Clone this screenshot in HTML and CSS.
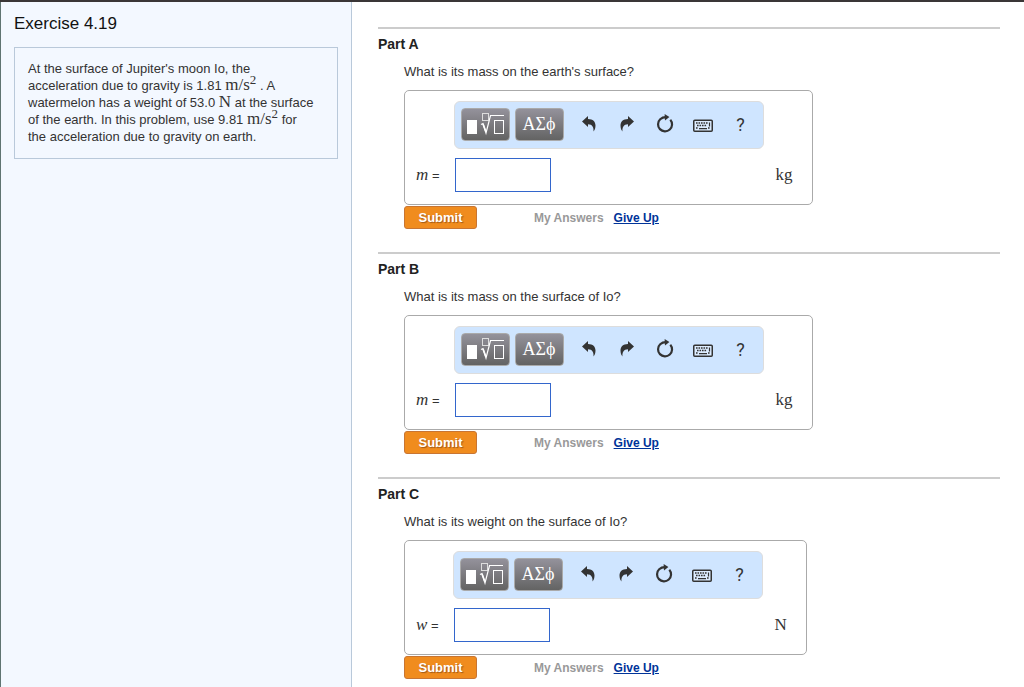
FILE: index.html
```html
<!DOCTYPE html>
<html lang="en">
<head>
<meta charset="utf-8">
<title>Exercise 4.19</title>
<link rel="stylesheet" href="styles.css">
</head>
<body>
<svg class="sprite" aria-hidden="true">
  <symbol id="template" viewBox="0 0 39 24">
    <rect x="1" y="8" width="10" height="14" fill="#fff"/>
    <rect x="16.500" y="1.500" width="6" height="7" fill="none" stroke="#ddd"/>
    <path d="M15 12.500l2-1 3 9.500 4.500-17.500h13.500" fill="none" stroke="#fff" stroke-width="1.200"/>
    <path d="M17 12l3 8" stroke="#fff" stroke-width="1.700"/>
    <rect x="28.500" y="8.500" width="9" height="13" fill="none" stroke="#fff"/>
  </symbol>
  <symbol id="undo" viewBox="0 0 14 16">
    <path d="M0 5.500L6 0V3C11 3 13.500 5.800 13.500 9.500C13.500 12 12.800 14 11.500 15.500C11.900 11.500 10.500 8.300 6 8.200V11Z"/>
  </symbol>
  <symbol id="reset" viewBox="0 0 18 20">
    <path d="M14.300 5.700A7 7 0 1 1 4.200 5.300Q6.500 3.200 10 3.200" fill="none" stroke="currentColor" stroke-width="2.200"/>
    <path d="M8.600 0L13.400 3L9 6.600Z"/>
  </symbol>
  <symbol id="keys" viewBox="0 0 20 13">
    <rect x="0.750" y="1.250" width="18.500" height="11" rx="1" fill="#dcecff" stroke="currentColor" stroke-width="1.500"/>
    <path d="M3 4h12M4 6.500h10M3 9h2M15 9h2" fill="none" stroke="currentColor" stroke-width="1.300" stroke-dasharray="1.600 0.900"/>
    <path d="M6 9.600h8M16.500 3.500v4" fill="none" stroke="currentColor" stroke-width="1.200"/>
  </symbol>
</svg>
<div class="page">
  <aside class="sidebar">
    <h1 class="title">Exercise 4.19</h1>
    <p class="intro">At the surface of Jupiter's moon Io, the acceleration due to gravity is 1.81 <span class="math">m/s<sup>2</sup></span> . A watermelon has a weight of 53.0 <span class="math">N</span> at the surface of the earth. In this problem, use 9.81 <span class="math">m/s<sup>2</sup></span> for the acceleration due to gravity on earth.</p>
  </aside>
  <main class="parts">
    <section class="part">
      <h2 class="part-title">Part A</h2>
      <form class="part-body">
        <p class="question">What is its mass on the earth's surface?</p>
        <div class="answer">
          <div class="toolbar">
            <button type="button" class="palette" aria-label="Templates"><svg class="template"><use href="#template"/></svg></button>
            <button type="button" class="palette">ΑΣϕ</button>
            <button type="button" class="tool" aria-label="Undo"><svg class="arrow"><use href="#undo"/></svg></button>
            <button type="button" class="tool" aria-label="Redo"><svg class="arrow flip"><use href="#undo"/></svg></button>
            <button type="button" class="tool" aria-label="Reset"><svg class="reset"><use href="#reset"/></svg></button>
            <button type="button" class="tool" aria-label="Keyboard"><svg class="keys"><use href="#keys"/></svg></button>
            <button type="button" class="tool">?</button>
          </div>
          <label class="variable" for="a"><i class="math">m</i> =</label>
          <input class="field" id="a" type="text">
          <span class="unit">kg</span>
        </div>
        <div class="actions">
          <button type="button" class="submit">Submit</button>
          <span class="mine">My Answers</span>
          <a class="give-up" href="#">Give Up</a>
        </div>
      </form>
    </section>
    <section class="part">
      <h2 class="part-title">Part B</h2>
      <form class="part-body">
        <p class="question">What is its mass on the surface of Io?</p>
        <div class="answer">
          <div class="toolbar">
            <button type="button" class="palette" aria-label="Templates"><svg class="template"><use href="#template"/></svg></button>
            <button type="button" class="palette">ΑΣϕ</button>
            <button type="button" class="tool" aria-label="Undo"><svg class="arrow"><use href="#undo"/></svg></button>
            <button type="button" class="tool" aria-label="Redo"><svg class="arrow flip"><use href="#undo"/></svg></button>
            <button type="button" class="tool" aria-label="Reset"><svg class="reset"><use href="#reset"/></svg></button>
            <button type="button" class="tool" aria-label="Keyboard"><svg class="keys"><use href="#keys"/></svg></button>
            <button type="button" class="tool">?</button>
          </div>
          <label class="variable" for="b"><i class="math">m</i> =</label>
          <input class="field" id="b" type="text">
          <span class="unit">kg</span>
        </div>
        <div class="actions">
          <button type="button" class="submit">Submit</button>
          <span class="mine">My Answers</span>
          <a class="give-up" href="#">Give Up</a>
        </div>
      </form>
    </section>
    <section class="part">
      <h2 class="part-title">Part C</h2>
      <form class="part-body">
        <p class="question">What is its weight on the surface of Io?</p>
        <div class="answer">
          <div class="toolbar">
            <button type="button" class="palette" aria-label="Templates"><svg class="template"><use href="#template"/></svg></button>
            <button type="button" class="palette">ΑΣϕ</button>
            <button type="button" class="tool" aria-label="Undo"><svg class="arrow"><use href="#undo"/></svg></button>
            <button type="button" class="tool" aria-label="Redo"><svg class="arrow flip"><use href="#undo"/></svg></button>
            <button type="button" class="tool" aria-label="Reset"><svg class="reset"><use href="#reset"/></svg></button>
            <button type="button" class="tool" aria-label="Keyboard"><svg class="keys"><use href="#keys"/></svg></button>
            <button type="button" class="tool">?</button>
          </div>
          <label class="variable" for="c"><i class="math">w</i> =</label>
          <input class="field" id="c" type="text">
          <span class="unit">N</span>
        </div>
        <div class="actions">
          <button type="button" class="submit">Submit</button>
          <span class="mine">My Answers</span>
          <a class="give-up" href="#">Give Up</a>
        </div>
      </form>
    </section>
  </main>
</div>
</body>
</html>
```

FILE: styles.css
```css
* { box-sizing: border-box; }
body {
  margin: 0;
  background: #fff;
  color: #333;
  font: 13px/17px "Liberation Sans", Arial, sans-serif;
}
button, input { font: inherit; padding: 0; }
.sprite { display: none; }
.page {
  display: flex;
  min-height: 100vh;
  border-top: 2px solid #3a3637;
}
.sidebar {
  flex: 0 0 352px;
  padding: 12px 13px;
  background: #f3f8ff;
  border-left: 1px solid #5f7471;
  border-right: 1px solid #b9c9da;
}
.title {
  margin: 0 0 13px;
  color: #111;
  font-size: 17px;
  font-weight: normal;
  line-height: 20px;
}
.intro {
  margin: 0;
  padding: 12px 22px 13px 13px;
  border: 1px solid #b9c9da;
}
.math, .unit {
  font-family: "Liberation Serif", "Times New Roman", serif;
  font-size: 17px;
  line-height: 1;
}
.intro .math, .math sup { line-height: 0; }
.math sup { font-size: 13px; vertical-align: 6px; }
.parts { flex: 1; min-width: 0; padding: 25px 24px 0 26px; }
.part {
  margin-bottom: 23px;
  border-top: 2px solid #ccc;
}
.part:last-child { margin-bottom: 0; }
.part-title {
  margin: 0;
  padding: 7px 0 10px;
  color: #222;
  font-size: 14px;
  line-height: 17px;
}
.part-body { margin-left: 26px; }
.question { margin: 0 0 10px; }
.answer {
  display: inline-grid;
  grid-template-columns: auto 310px auto;
  grid-template-rows: 48px 34px;
  row-gap: 9px;
  align-items: center;
  padding: 10px 19px 12px 11px;
  border: 1px solid #aaa;
  border-radius: 5px;
  vertical-align: top;
}
.toolbar {
  grid-column: 2;
  display: flex;
  align-items: center;
  height: 48px;
  padding: 0 0 2px 6px;
  background: #cfe5ff;
  border: 1px solid #ddd;
  border-radius: 6px;
}
.palette {
  width: 49px;
  height: 33px;
  margin-right: 5px;
  border: 1px solid #aaa;
  border-radius: 4px;
  background: linear-gradient(#94929b, #636363);
  color: #fff;
  font-family: "Liberation Serif", "Times New Roman", serif;
  font-size: 18px;
}
.palette + .tool { margin-left: 1px; }
.template { display: block; width: 39px; height: 24px; margin: 0 auto; }
.tool {
  display: grid;
  place-items: center;
  width: 38px;
  height: 33px;
  border: 0;
  background: none;
  color: #333;
  fill: #333;
  font-family: Roboto, sans-serif;
  font-size: 18px;
}
.arrow { width: 14px; height: 16px; }
.flip { transform: scaleX(-1); }
.reset { width: 18px; height: 20px; }
.keys { width: 20px; height: 13px; margin-top: 3px; }
.variable { grid-column: 1; margin-right: 14px; }
.field {
  width: 96px;
  height: 34px;
  margin-left: 1px;
  background: #fff;
  border: 1px solid #36c;
}
.unit { margin: 0 0 2px 12px; }
.actions { display: flex; align-items: baseline; padding-top: 1px; }
.submit {
  width: 73px;
  height: 23px;
  margin-right: 57px;
  background: #f08c1e;
  border: 1px solid #c87532;
  border-radius: 3px;
  color: #fff;
  font-weight: bold;
  text-shadow: 1px 1px 1px #a05818;
}
.mine { margin-right: 10px; color: #999; font-size: 12px; font-weight: bold; }
.give-up { color: #039; font-size: 12px; font-weight: bold; }
```
